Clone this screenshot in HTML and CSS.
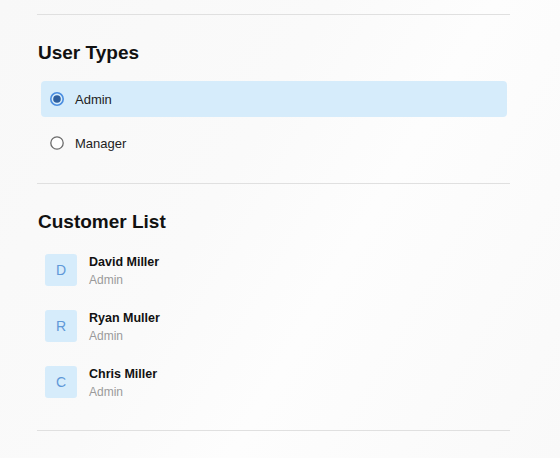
FILE: index.html
```html
<!DOCTYPE html>
<html lang="en">
<head>
<meta charset="utf-8">
<title>User Types</title>
<link rel="stylesheet" href="styles.css">
</head>
<body>
<main class="container">
  <div class="divider"></div>
  <section class="section">
    <h2 class="heading">User Types</h2>
    <div class="options">
      <label class="option option-selected">
        <svg class="radio" width="14" height="14" viewBox="0 0 14 14">
          <circle cx="7" cy="7" r="6.2" fill="none" stroke="#4a8de0" stroke-width="1.6"/>
          <circle cx="7" cy="7" r="3.8" fill="#2f5f9e"/>
        </svg>
        <span class="option-label">Admin</span>
      </label>
      <label class="option">
        <svg class="radio" width="14" height="14" viewBox="0 0 14 14">
          <circle cx="7" cy="7" r="6.2" fill="#fff" stroke="#6b6b6b" stroke-width="1.3"/>
        </svg>
        <span class="option-label">Manager</span>
      </label>
    </div>
  </section>
  <div class="divider"></div>
  <section class="section">
    <h2 class="heading">Customer List</h2>
    <ul class="customers">
      <li class="customer">
        <div class="avatar">D</div>
        <div class="customer-info">
          <div class="customer-name">David Miller</div>
          <div class="customer-role">Admin</div>
        </div>
      </li>
      <li class="customer">
        <div class="avatar">R</div>
        <div class="customer-info">
          <div class="customer-name">Ryan Muller</div>
          <div class="customer-role">Admin</div>
        </div>
      </li>
      <li class="customer">
        <div class="avatar">C</div>
        <div class="customer-info">
          <div class="customer-name">Chris Miller</div>
          <div class="customer-role">Admin</div>
        </div>
      </li>
    </ul>
  </section>
  <div class="divider"></div>
</main>
</body>
</html>
```
FILE: styles.css
```css
html, body {
  margin: 0;
  padding: 0;
}
body {
  width: 560px;
  height: 458px;
  overflow: hidden;
  background: linear-gradient(120deg, #f8f8f8 0%, #fafafa 40%, #fdfdfd 60%, #f9f9f9 100%);
  font-family: "Liberation Sans", Arial, sans-serif;
  color: #111;
}
.container {
  width: 473px;
  margin-left: 37px;
  padding-top: 14px;
  display: flex;
  flex-direction: column;
}
.divider {
  height: 1px;
  background: #e0e0e0;
}
.section {
  display: flex;
  flex-direction: column;
}
.heading {
  margin: 27px 0 0 1px;
  font-size: 19px;
  line-height: 22px;
  font-weight: 700;
  color: #111;
}
.options {
  margin: 17px 3px 22px 4px;
  display: flex;
  flex-direction: column;
  gap: 8px;
}
.option {
  height: 36px;
  display: flex;
  align-items: center;
  gap: 11px;
  padding-left: 9px;
  border-radius: 4px;
}
.option-selected {
  background: #d6ecfb;
}
.radio {
  flex: none;
  display: block;
}
.option-label {
  font-size: 13px;
  color: #222;
}
.customers {
  list-style: none;
  margin: 21px 0 32px 8px;
  padding: 0;
  display: flex;
  flex-direction: column;
  gap: 24px;
}
.customer {
  height: 32px;
  display: flex;
  align-items: flex-start;
  gap: 12px;
}
.avatar {
  width: 32px;
  height: 32px;
  border-radius: 3px;
  background: #d6ecfb;
  color: #5f98d8;
  font-size: 14px;
  display: flex;
  align-items: center;
  justify-content: center;
  flex: none;
}
.customer-info {
  display: flex;
  flex-direction: column;
}
.customer-name {
  font-size: 12.5px;
  line-height: 16px;
  font-weight: 700;
  color: #111;
}
.customer-role {
  margin-top: 3px;
  font-size: 12px;
  line-height: 15px;
  color: #9a9a9a;
}
```
